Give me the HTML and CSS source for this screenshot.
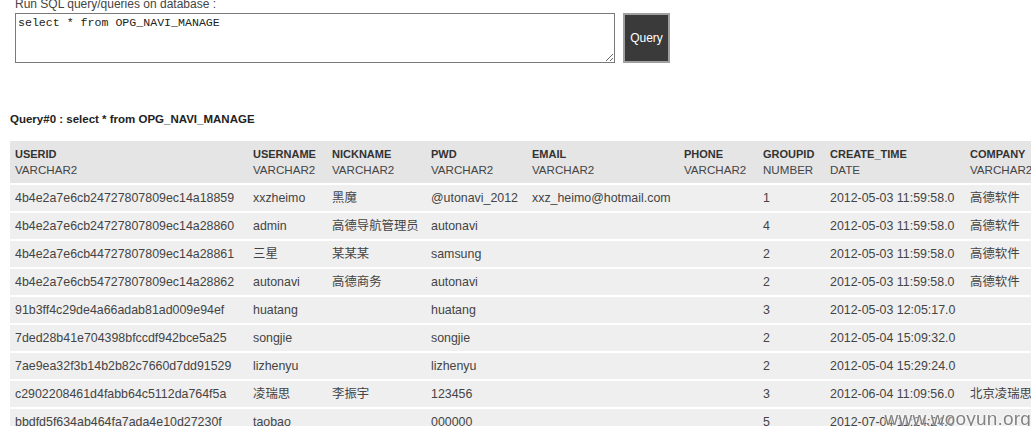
FILE: index.html
```html
<!DOCTYPE html>
<html>
<head>
<meta charset="utf-8">
<link rel="stylesheet" href="styles.css">
</head>
<body>
<form class="sql-form">
  <label class="sql-label">Run SQL query/queries on database :</label>
  <div class="sql-row">
    <textarea class="sql-input">select * from OPG_NAVI_MANAGE</textarea>
    <button type="button" class="sql-btn">Query</button>
  </div>
</form>
<div class="result">
  <div class="result-title">Query#0 : select * from OPG_NAVI_MANAGE</div>
  <div class="table-wrap">
  <table class="grid">
    <colgroup>
      <col class="c1"><col class="c2"><col class="c3"><col class="c4"><col class="c5"><col class="c6"><col class="c7"><col class="c8"><col class="c9">
    </colgroup>
    <thead>
      <tr>
        <th><b>USERID</b><span>VARCHAR2</span></th>
        <th><b>USERNAME</b><span>VARCHAR2</span></th>
        <th><b>NICKNAME</b><span>VARCHAR2</span></th>
        <th><b>PWD</b><span>VARCHAR2</span></th>
        <th><b>EMAIL</b><span>VARCHAR2</span></th>
        <th><b>PHONE</b><span>VARCHAR2</span></th>
        <th><b>GROUPID</b><span>NUMBER</span></th>
        <th><b>CREATE_TIME</b><span>DATE</span></th>
        <th><b>COMPANY</b><span>VARCHAR2</span></th>
      </tr>
    </thead>
    <tbody>
      <tr><td>4b4e2a7e6cb24727807809ec14a18859</td><td>xxzheimo</td><td>黑魔</td><td>@utonavi_2012</td><td>xxz_heimo@hotmail.com</td><td></td><td>1</td><td>2012-05-03 11:59:58.0</td><td>高德软件</td></tr>
      <tr><td>4b4e2a7e6cb24727807809ec14a28860</td><td>admin</td><td>高德导航管理员</td><td>autonavi</td><td></td><td></td><td>4</td><td>2012-05-03 11:59:58.0</td><td>高德软件</td></tr>
      <tr><td>4b4e2a7e6cb44727807809ec14a28861</td><td>三星</td><td>某某某</td><td>samsung</td><td></td><td></td><td>2</td><td>2012-05-03 11:59:58.0</td><td>高德软件</td></tr>
      <tr><td>4b4e2a7e6cb54727807809ec14a28862</td><td>autonavi</td><td>高德商务</td><td>autonavi</td><td></td><td></td><td>2</td><td>2012-05-03 11:59:58.0</td><td>高德软件</td></tr>
      <tr><td>91b3ff4c29de4a66adab81ad009e94ef</td><td>huatang</td><td></td><td>huatang</td><td></td><td></td><td>3</td><td>2012-05-03 12:05:17.0</td><td></td></tr>
      <tr><td>7ded28b41e704398bfccdf942bce5a25</td><td>songjie</td><td></td><td>songjie</td><td></td><td></td><td>2</td><td>2012-05-04 15:09:32.0</td><td></td></tr>
      <tr><td>7ae9ea32f3b14b2b82c7660d7dd91529</td><td>lizhenyu</td><td></td><td>lizhenyu</td><td></td><td></td><td>2</td><td>2012-05-04 15:29:24.0</td><td></td></tr>
      <tr><td>c2902208461d4fabb64c5112da764f5a</td><td>凌瑞思</td><td>李振宇</td><td>123456</td><td></td><td></td><td>3</td><td>2012-06-04 11:09:56.0</td><td>北京凌瑞思科技有限公司</td></tr>
      <tr><td>bbdfd5f634ab464fa7ada4e10d27230f</td><td>taobao</td><td></td><td>000000</td><td></td><td></td><td>5</td><td>2012-07-04 11:24:24.0</td><td></td></tr>
    </tbody>
  </table>
  </div>
</div>
<div class="watermark">www.wooyun.org</div>
</body>
</html>
```

FILE: styles.css
```css
html, body {
  margin: 0;
  padding: 0;
  overflow: hidden;
  background: #fff;
}
body {
  font-family: "Liberation Sans", Arial, "Noto Sans CJK SC", sans-serif;
  font-size: 12px;
  color: #333;
}
.sql-form {
  margin: -3px 0 0 0;
  padding-left: 15px;
}
.sql-label {
  display: block;
  line-height: 14px;
  height: 16px;
  color: #444;
}
.sql-row {
  display: flex;
  gap: 8px;
  align-items: stretch;
}
.sql-input {
  box-sizing: border-box;
  width: 600px;
  height: 50px;
  border: 1px solid #7a7a7a;
  padding: 2px 2px;
  margin: 0;
  font-family: "Liberation Mono", "Courier New", monospace;
  font-size: 11.6px;
  line-height: 14px;
  color: #222;
  background: #fff;
}
.sql-btn {
  box-sizing: border-box;
  width: 47px;
  height: 50px;
  margin: 0;
  padding: 0;
  background: #3a3a3a;
  border: 2px solid #a0a0a0;
  color: #fff;
  font-family: "Liberation Sans", Arial, sans-serif;
  font-size: 12px;
}
.result {
  padding-left: 10px;
  margin-top: 49px;
}
.result-title {
  font-weight: bold;
  font-size: 11.5px;
  line-height: 14px;
  color: #222;
  margin-bottom: 15px;
}
.table-wrap {
  overflow: hidden;
}
.grid {
  table-layout: fixed;
  border-collapse: separate;
  border-spacing: 0;
  width: 1140px;
}
.c1 { width: 238px; }
.c2 { width: 79px; }
.c3 { width: 99px; }
.c4 { width: 101px; }
.c5 { width: 152px; }
.c6 { width: 79px; }
.c7 { width: 67px; }
.c8 { width: 140px; }
.c9 { width: 185px; }
.grid th {
  background: #e5e5e5;
  text-align: left;
  font-weight: normal;
  padding: 5px 5px 5px 5px;
  line-height: 16px;
  vertical-align: top;
  white-space: nowrap;
}
.grid th b {
  display: block;
  font-weight: bold;
  font-size: 11px;
  color: #333;
}
.grid th span {
  display: block;
  font-size: 11.6px;
  color: #444;
}
.grid td {
  background: #efefef;
  border-top: 2px solid #fff;
  height: 26px;
  padding: 0 5px;
  font-size: 12.4px;
  line-height: 16px;
  vertical-align: middle;
  white-space: nowrap;
  overflow: hidden;
  color: #444;
}
.watermark {
  position: fixed;
  right: 0;
  bottom: -4px;
  font-family: "Liberation Sans", Arial, sans-serif;
  font-size: 19px;
  color: rgba(90, 90, 90, 0.75);
  text-shadow: 0 0 2px #fff, 0 0 2px #fff;
  letter-spacing: 0.2px;
}
```
